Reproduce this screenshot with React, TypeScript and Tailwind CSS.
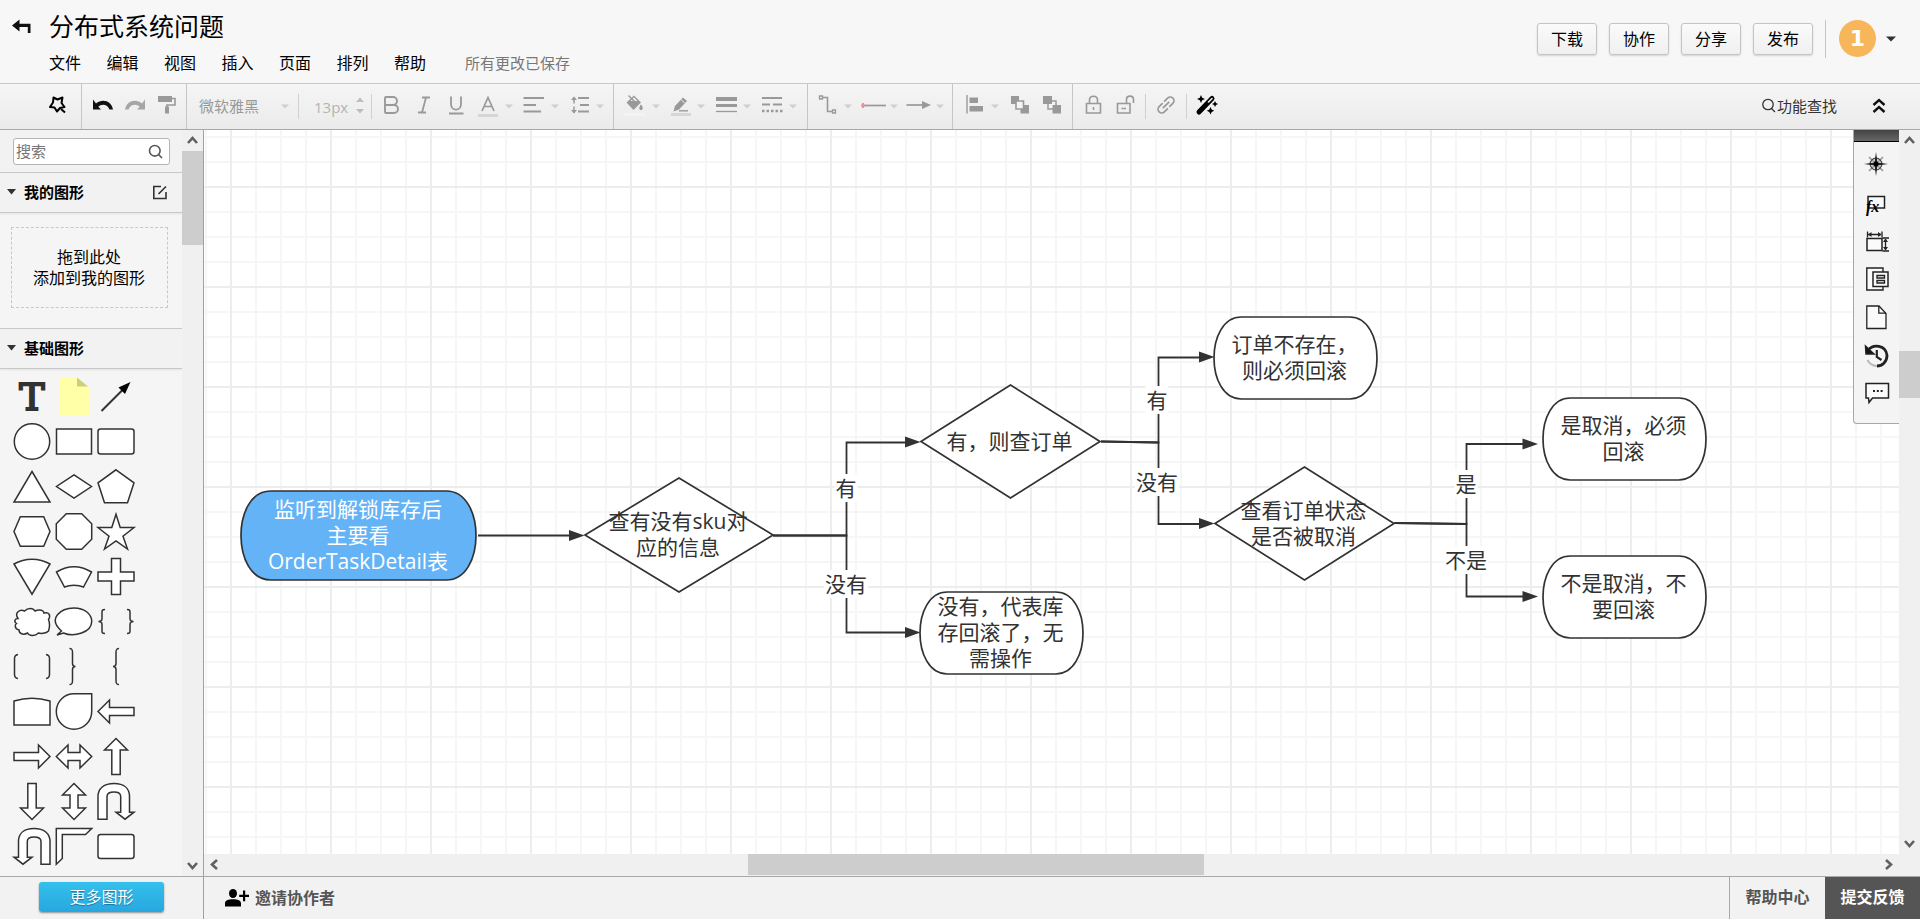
import React from "react";
import { Bold } from "lucide-react";

const INK = "#323232";

/* ---------- shared pieces ---------- */

type Dir = "up" | "down" | "left" | "right";

const chevrons: Record<Dir, string> = {
  up: "M6 13L10.5 8L15 13",
  down: "M6 8L10.5 13L15 8",
  left: "M13 6L8 10.5L13 15",
  right: "M8 6L13 10.5L8 15",
};

function ScrollArrow({ dir, label }: { dir: Dir; label: string }) {
  return (
    <button type="button" aria-label={label} className="block size-[21px] shrink-0">
      <svg width="21" height="21" viewBox="0 0 21 21">
        <path d={chevrons[dir]} fill="none" stroke="#606060" strokeWidth="2.6" />
      </svg>
    </button>
  );
}

/* ---------- header ---------- */

const menus = ["文件", "编辑", "视图", "插入", "页面", "排列", "帮助"];
const actions = ["下载", "协作", "分享", "发布"];

function Header() {
  return (
    <header className="flex h-[84px] shrink-0 items-start border-b border-[#c8c8c8] bg-[#f7f7f7]">
      <a href="#back" aria-label="返回" className="mt-[17px] ml-[10px] block w-[39px]">
        <svg width="24" height="18" viewBox="0 0 24 18">
          <path d="M2 8.500L9.500 2.500V6.700H20.500V16H17.800V10H9.500V14.500Z" fill="#111" />
        </svg>
      </a>
      <div className="flex flex-col">
        <h1 className="mt-2 text-[25px] leading-9 text-black">分布式系统问题</h1>
        <nav className="mt-[7px] flex items-center">
          <ul className="flex w-[377px] justify-between">
            {menus.map((m) => (
              <li key={m}>
                <button type="button" className="block text-base leading-6 text-black">
                  {m}
                </button>
              </li>
            ))}
          </ul>
          <span className="ml-[39px] text-[15px] leading-6 text-[#777]">所有更改已保存</span>
        </nav>
      </div>
      <div className="ml-auto flex items-start pr-6">
        <div className="mt-[23px] flex gap-3">
          {actions.map((a) => (
            <button
              key={a}
              type="button"
              className="h-8 w-[60px] rounded-[3px] border border-[#c4c4c4] bg-linear-to-b from-[#fafafa] to-[#f0f0f0] text-base leading-7 text-black shadow-[0_1px_2px_rgba(0,0,0,0.15)]"
            >
              {a}
            </button>
          ))}
        </div>
        <span className="mt-5 ml-3 h-[38px] w-px bg-[#c4c4c4]" />
        <button type="button" aria-label="账户" className="mt-5 ml-[13px] flex items-center gap-[10px]">
          <span className="flex size-[37px] items-center justify-center rounded-full bg-[#f8b65b] font-['DejaVu_Sans',sans-serif] text-[22px] leading-none font-bold text-white">
            1
          </span>
          <svg width="10" height="6" viewBox="0 0 10 6">
            <path d="M0 0.500H10L5 5.500Z" fill={INK} />
          </svg>
        </button>
      </div>
    </header>
  );
}

/* ---------- toolbar ---------- */

/* Toolbar artwork shares one sheet whose y axis runs from 84 to 129. */
function Tool({ label, x, w, children }: { label: string; x: number; w: number; children: React.ReactNode }) {
  return (
    <button type="button" aria-label={label} className="block shrink-0">
      <svg width={w} height="45" viewBox={`${x} 84 ${w} 45`} fill="none" stroke="#999" strokeWidth="1.800">
        {children}
      </svg>
    </button>
  );
}

function Caret({ x }: { x: number }) {
  return <path d={`M${x - 4} 104.500h8l-4 4z`} fill="#cfcfcf" stroke="none" />;
}

function Group({ children, first }: { children: React.ReactNode; first?: boolean }) {
  return (
    <div className={first ? "flex h-[45px] items-center pl-10" : "flex h-[45px] items-center border-l border-[#c6c6c6]"}>
      {children}
    </div>
  );
}

function Divider() {
  return <span className="h-[25px] w-px shrink-0 bg-[#d0d0d0]" />;
}

function Toolbar() {
  return (
    <div className="flex h-[46px] shrink-0 items-start border-b border-[#a8a8a8] bg-linear-to-b from-[#f5f5f5] to-[#ebebeb]">
      <Group first>
        <Tool label="美化" x={40} w={41}>
          <path
            d="M53.500 97.500L57.500 99.500L62.500 97.500L61.500 103L64.500 107L60 108L57 111.500L54.500 107.500L50 107L53 102.500Z"
            stroke="#000"
            strokeWidth="2"
            strokeLinejoin="round"
          />
          <path d="M61 109L65 112.500" stroke="#000" strokeWidth="2" />
        </Tool>
      </Group>
      <Group>
        <Tool label="撤销" x={82} w={36}>
          <path d="M93 99.500V109.500H101L98.300 106.800C101 104 107 103.500 109.500 109.500H113C111.500 100 101.500 98.500 96 103.500Z" fill="#111" stroke="none" />
        </Tool>
        <Tool label="恢复" x={118} w={33}>
          <path d="M145 99.500V109.500H137L139.700 106.800C137 104 131 103.500 128.500 109.500H125C126.500 100 136.500 98.500 142 103.500Z" fill="#a6a6a6" stroke="none" />
        </Tool>
        <Tool label="格式刷" x={151} w={35}>
          <path d="M158 96H172V102H158Z" fill="#999" stroke="none" />
          <path d="M172 98.500H175V105H167V107" strokeWidth="1.600" />
          <path d="M165 106.500H169V113.500H165Z" fill="#999" stroke="none" />
        </Tool>
      </Group>
      <Group>
        <select
          aria-label="字体"
          className="ml-3 w-[69px] appearance-none bg-transparent pb-[2px] text-[15px] leading-6 text-[#999] outline-none"
          defaultValue="微软雅黑"
        >
          <option>微软雅黑</option>
        </select>
        <svg width="30" height="45" viewBox="268 84 30 45" className="shrink-0">
          <Caret x={285} />
        </svg>
        <Divider />
        <input
          aria-label="字号"
          defaultValue="13px"
          className="ml-[15px] w-9 bg-transparent text-[15px] leading-6 text-[#b4b4b4] outline-none"
        />
        <svg width="21" height="45" viewBox="350 84 21 45" className="shrink-0">
          <path d="M356 102h8l-4-4.500zM356 109h8l-4 4.500z" fill="#bdbdbd" />
        </svg>
        <Divider />
        <Tool label="粗体" x={372} w={32}>
          <Bold x={379} y={93} size={24} strokeWidth={1.9} color="#999" />
        </Tool>
        <Tool label="斜体" x={404} w={36}>
          <path d="M422 97.500H430M418 112.500H426M426 97.500L422 112.500" />
        </Tool>
        <Tool label="下划线" x={440} w={32}>
          <path d="M451 96.500V104C451 111.500 461 111.500 461 104V96.500M449 113.500H463.500" />
        </Tool>
        <Tool label="文字颜色" x={472} w={45}>
          <path d="M482 111L488 97.500L494 111M484.200 106.500H491.800" strokeWidth="1.700" />
          <path d="M478 114H498V117H478Z" fill="#d6d6d6" stroke="none" />
          <Caret x={509} />
        </Tool>
        <Tool label="对齐" x={517} w={47}>
          <path d="M523.500 98H544M523.500 105H536M523.500 111.500H541" />
          <Caret x={555} />
        </Tool>
        <Tool label="行距" x={564} w={49}>
          <path d="M578 98H589M580 105H589M578 111.500H589" />
          <path d="M574 97V103.500M574 106.500V113" strokeWidth="1.500" />
          <path d="M571 100L574 96.500L577 100ZM571 110L574 113.500L577 110Z" fill="#999" stroke="none" />
          <Caret x={600} />
        </Tool>
      </Group>
      <Group>
        <Tool label="填充颜色" x={614} w={51}>
          <path d="M626.500 102.500L634 95.500L641 102.500L633.500 110Z" fill="#999" stroke="none" />
          <path d="M630.500 101L634 97.300L637.500 101Z" fill="#eee" stroke="none" />
          <path d="M628.500 95.500L634.500 101.500" strokeWidth="1.400" />
          <path d="M641 104.500C643.500 107.500 643 110 641 110S638.500 107.500 641 104.500Z" fill="#999" stroke="none" />
          <path d="M624 113H645V116H624Z" fill="#f3f3f3" stroke="none" />
          <Caret x={656} />
        </Tool>
        <Tool label="线条颜色" x={665} w={44}>
          <path d="M673.500 111.500L675 106L683 97.500L687 101L679 109.500Z" fill="#999" stroke="none" />
          <path d="M681 99.500L685 103.500" stroke="#eee" strokeWidth="1" />
          <path d="M679 110.800H688" strokeWidth="1.400" />
          <path d="M671 113H691V116H671Z" fill="#d6d6d6" stroke="none" />
          <Caret x={701} />
        </Tool>
        <Tool label="线条宽度" x={709} w={46}>
          <path d="M716 99H737" strokeWidth="4" />
          <path d="M716 105.500H737" strokeWidth="3" />
          <path d="M716 111.500H737" strokeWidth="1.300" />
          <Caret x={747} />
        </Tool>
        <Tool label="线条样式" x={755} w={52}>
          <path d="M762 98H782M762 104.500H770M773 104.500H782" />
          <path d="M762 111H783" strokeWidth="2.500" strokeDasharray="2.500 2" />
          <Caret x={793} />
        </Tool>
      </Group>
      <Group>
        <Tool label="连线类型" x={808} w={47}>
          <path d="M822 97.500H827.500V111.500H832" strokeWidth="1.600" />
          <path d="M819.500 96H822.500V99H819.500ZM832.500 110H835.500V113H832.500Z" strokeWidth="1.300" />
          <Caret x={848} />
        </Tool>
        <Tool label="起点" x={855} w={46}>
          <path d="M863 105.500H886" strokeWidth="1.700" />
          <path d="M861 105.500H865M863 103V108" stroke="#f09090" strokeWidth="2" />
          <Caret x={894} />
        </Tool>
        <Tool label="终点" x={901} w={51}>
          <path d="M906.500 105H924" strokeWidth="1.700" />
          <path d="M922 101L931 105L922 109Z" fill="#999" stroke="none" />
          <Caret x={940} />
        </Tool>
      </Group>
      <Group>
        <Tool label="对齐图形" x={953} w={51}>
          <path d="M967 95V113.500" strokeWidth="1.400" />
          <path d="M969.500 97.500H978V103H969.500ZM969.500 106H983V111.500H969.500Z" fill="#999" stroke="none" />
          <Caret x={995} />
        </Tool>
        <Tool label="置于顶层" x={1004} w={32}>
          <path d="M1011 96H1019V104H1011ZM1020.500 105H1029V113.500H1020.500Z" fill="#999" stroke="none" />
          <path d="M1016 101H1023.500V109H1016Z" fill="#f4f4f4" strokeWidth="1.600" />
        </Tool>
        <Tool label="置于底层" x={1036} w={36}>
          <path d="M1048 101H1056V109H1048Z" fill="#f4f4f4" strokeWidth="1.500" />
          <path d="M1043 96H1052V104H1043ZM1052.500 105H1061V113.500H1052.500Z" fill="#999" stroke="none" />
        </Tool>
      </Group>
      <Group>
        <Tool label="锁定" x={1073} w={36}>
          <path d="M1086.500 103.500H1100.500V113H1086.500ZM1089.500 103V100C1089.500 95 1097.500 95 1097.500 100V103M1093.500 107V110" strokeWidth="1.600" />
        </Tool>
        <Tool label="解锁" x={1109} w={36}>
          <path d="M1117.500 103.500H1130V113H1117.500ZM1126.500 103V99.500C1126.500 95 1133.500 95 1133.500 99.500V103M1121.500 108.500H1126" strokeWidth="1.600" />
        </Tool>
        <Divider />
        <Tool label="链接" x={1146} w={40}>
          <g transform="rotate(-45 1166 105)" strokeWidth="1.700">
            <path d="M1165 101.300H1160a3.700 3.700 0 0 0 0 7.400H1165M1167 101.300H1172a3.700 3.700 0 0 1 0 7.400H1167M1161.500 105H1170.500" />
          </g>
        </Tool>
        <Divider />
        <Tool label="一键美化" x={1187} w={37}>
          <path d="M1199 112L1212 98.500" stroke="#000" strokeWidth="5" strokeLinecap="round" />
          <path d="M1208.500 102L1212 98.500" stroke="#eee" strokeWidth="1.600" strokeLinecap="round" />
          <path
            d="M1201 95l1.200 2.800 2.800 1.200-2.800 1.200-1.200 2.800-1.200-2.800-2.800-1.200 2.800-1.200zM1215 101l1 2 2 1-2 1-1 2-1-2-2-1 2-1zM1210.500 107l1.200 2.500 2.500 1.200-2.500 1.200-1.200 2.500-1.200-2.500-2.500-1.200 2.500-1.200z"
            fill="#000"
            stroke="none"
          />
        </Tool>
      </Group>
      <div className="ml-auto flex h-[45px] items-center pr-[34px]">
        <button type="button" className="flex items-center gap-px pb-[2px] text-[15px] leading-6 text-[#333]">
          <svg width="15" height="15" viewBox="0 0 15 15" fill="none" stroke="#333" strokeWidth="1.300">
            <circle cx="7" cy="6.500" r="5.200" />
            <path d="M10.500 10.500L14 14" />
          </svg>
          功能查找
        </button>
        <button type="button" aria-label="收起" className="ml-[35px] block pb-px">
          <svg width="14" height="16" viewBox="0 0 14 16" fill="none" stroke="#111" strokeWidth="2.400">
            <path d="M1.500 7L7 2L12.500 7M1.500 14L7 9L12.500 14" />
          </svg>
        </button>
      </div>
    </div>
  );
}

/* ---------- shape palette ---------- */

const bend =
  "M-18 17.700V-5C-18-13-12-18-2-18S13.500-13 13.500-5V10.700H18L9 17.700L0 10.700H4.700V-5C4.700-8 2.500-9.500-2-9.500S-9-8-9-5V17.700Z";

const palette: { name: string; art: React.ReactNode }[] = [
  {
    name: "文本",
    art: (
      <text
        x="0"
        y="13.500"
        textAnchor="middle"
        fontFamily="DejaVu Serif"
        fontSize="38"
        fill={INK}
        stroke={INK}
        strokeWidth="2"
      >
        T
      </text>
    ),
  },
  {
    name: "备注",
    art: (
      <g stroke="none">
        <path d="M-15-19H3L15-9V19H-15Z" fill="#ffffa8" />
        <path d="M3-19V-10H14Z" fill="#cdcd7e" />
      </g>
    ),
  },
  {
    name: "箭头线",
    art: (
      <g>
        <path d="M-14.500 14.500L8-8" strokeWidth="2" />
        <path d="M14.500-14.500L9-2.500L2.500-9Z" fill="#000" stroke="none" />
      </g>
    ),
  },
  { name: "圆", art: <circle r="17.700" /> },
  { name: "矩形", art: <rect x="-17.500" y="-12.500" width="35" height="25" /> },
  { name: "圆角矩形", art: <rect x="-18" y="-12.500" width="36" height="25" rx="2.500" /> },
  { name: "三角形", art: <path d="M0-15L18 15.500H-18Z" /> },
  { name: "菱形", art: <path d="M0-11.700L17.500 0L0 11.700L-17.500 0Z" /> },
  { name: "五边形", art: <path d="M0-16.700L18-3.700L11.500 16.300H-11.500L-18-3.700Z" /> },
  { name: "六边形", art: <path d="M-11.700-14.700H11.700L18 0L11.700 14.700H-11.700L-18 0Z" /> },
  { name: "八边形", art: <path d="M-7.700-17.700H7.700L17.700-7.700V7.700L7.700 17.700H-7.700L-17.700 7.700V-7.700Z" /> },
  { name: "五角星", art: <path d="M0-17.300L4.200-4H18L7 4.700L11.500 17.500L0 9.500L-11.500 17.500L-7 4.700L-18-4H-4.200Z" /> },
  { name: "扇形", art: <path d="M-18-12.500C-7-19 7-19 18-12.500L0 17.700Z" /> },
  { name: "圆环段", art: <path d="M-17.500-4.500C-6-11.500 6-11.500 17.500-4.500L9.500 10.500C4 8 -4 8-9.500 10.500Z" /> },
  { name: "十字", art: <path d="M-4.500-18H4.500V-4.500H18V4.500H4.500V18H-4.500V4.500H-18V-4.500H-4.500Z" /> },
  {
    name: "云",
    art: (
      <path d="M-14-3C-18-9-12-12.500-7.500-10.500C-4-14 1-14 3-10.500C8-13 12-10.500 12-8.500C17-10 19-6 16.500-2C18.500 3 17 8 16.500 9.500C14 12.500 8 12 6.500 11.500C3 15-3 14.500-4.500 11.500C-9 14-13 12-13 8.500C-18 7-17 3-15.500 2C-18.500 0-17-3-14-3Z" />
    ),
  },
  {
    name: "气泡",
    art: <path d="M-12.500 9.500C-27-3-13-13.500 0-13.500C10-13.500 17.700-8 17.700 0C17.700 11 0 16-10.500 11.500L-17 13.500Z" />,
  },
  {
    name: "花括号对",
    art: (
      <path
        fill="none"
        d="M-11-12C-14-12-14-11-14-9V-3C-14-1-15 0-17.500 0C-15 0-14 1-14 3V9C-14 11-14 12-11 12M11-12C14-12 14-11 14-9V-3C14-1 15 0 17.500 0C15 0 14 1 14 3V9C14 11 14 12 11 12"
      />
    ),
  },
  {
    name: "括号对",
    art: <path fill="none" d="M-14-12C-17-11.500-17.500-10-17.500-8V8C-17.500 10-17 11.500-14 12M14-12C17-11.500 17.500-10 17.500-8V8C17.500 10 17 11.500 14 12" />,
  },
  {
    name: "右花括号",
    art: <path fill="none" d="M-4.500-18C-2-18-1.500-17-1.500-14V-3C-1.500-1-1 0 1.500 0C-1 0-1.500 1-1.500 3V14C-1.500 17-2 18-4.500 18" />,
  },
  {
    name: "左花括号",
    art: <path fill="none" d="M3-18C.5-18 0-17 0-14V-3C0-1-.5 0-3 0C-.5 0 0 1 0 3V14C0 17 .5 18 3 18" />,
  },
  { name: "弧顶矩形", art: <path d="M-18-10.500C-6-14.300 6-14.300 18-10.500V13.500H-18Z" /> },
  { name: "水滴", art: <path d="M0-17.700H17.700V0A17.700 17.700 0 1 1 0-17.700Z" /> },
  { name: "左箭头", art: <path d="M-18 0L-6.500-11.500V-4H18V4H-6.500V11.500Z" /> },
  { name: "右箭头", art: <path d="M18 0L6.500-11.500V-4H-18V4H6.500V11.500Z" /> },
  { name: "左右箭头", art: <path d="M-17.700 0L-6-11.500V-4H6V-11.500L17.700 0L6 11.500V4H-6V11.500Z" /> },
  { name: "上箭头", art: <path d="M0-18L11.500-6.500H4.200V18H-4.200V-6.500H-11.500Z" /> },
  { name: "下箭头", art: <path d="M0 18L11.500 6.500H4.200V-18H-4.200V6.500H-11.500Z" /> },
  { name: "上下箭头", art: <path d="M0-18L11.500-6.500H4V6.500H11.500L0 18L-11.500 6.500H-4V-6.500H-11.500Z" /> },
  { name: "右回转箭头", art: <path d={bend} /> },
  { name: "左回转箭头", art: <path d={bend} transform="scale(-1 1)" /> },
  { name: "角形", art: <path d="M-17.700-18H17.700L11.500-12H-11.700V12L-17.700 17.700Z" /> },
  { name: "容器", art: <rect x="-18" y="-12" width="36" height="24" rx="2.500" /> },
];

function SectionTitle({ title, children }: { title: string; children?: React.ReactNode }) {
  return (
    <div className="flex h-10 shrink-0 items-center border-b border-[#c8c8c8] bg-[#f2f2f2] pr-[14px] pb-px pl-[7px] shadow-[0_1px_2px_rgba(0,0,0,0.08)]">
      <button type="button" className="flex items-center gap-2 text-[15px] leading-6 font-bold text-black">
        <svg width="9" height="6" viewBox="0 0 9 6">
          <path d="M0 0H9L4.500 5.500Z" fill={INK} />
        </svg>
        {title}
      </button>
      {children}
    </div>
  );
}

function Sidebar() {
  return (
    <aside className="flex w-[204px] shrink-0 border-r border-[#a0a0a0]">
      <div className="flex min-w-0 flex-1 flex-col overflow-hidden bg-[#f5f5f5]">
        <div className="h-[43px] shrink-0 border-b border-[#c8c8c8] bg-[#f2f2f2] pt-2 pr-3 pl-[13px]">
          <label className="flex h-[27px] items-center rounded-[3px] border border-[#b4b4b4] bg-white pr-[6px] pb-px pl-[2px]">
            <input
              aria-label="搜索"
              placeholder="搜索"
              className="min-w-0 flex-1 bg-transparent text-[15px] leading-6 text-black outline-none placeholder:text-[#757575]"
            />
            <svg width="15" height="15" viewBox="0 0 15 15" fill="none" stroke="#555" strokeWidth="1.600">
              <circle cx="6.800" cy="6.800" r="5.300" />
              <path d="M10.500 10.500L14 14" />
            </svg>
          </label>
        </div>
        <SectionTitle title="我的图形">
          <button type="button" aria-label="管理我的图形" className="ml-auto block">
            <svg width="16" height="15" viewBox="0 0 16 15" fill="none" stroke={INK} strokeWidth="1.600">
              <path d="M9 1.500H1.800V13.500H14V7M6.500 9L14 1.500" />
            </svg>
          </button>
        </SectionTitle>
        <div className="shrink-0 border-b border-[#c8c8c8] pt-[14px] pr-[14px] pb-5 pl-[11px]">
          <div className="flex h-[81px] items-center justify-center border border-dashed border-[#c8c8c8] pr-px text-center text-base leading-[21px] text-black">
            拖到此处
            <br />
            添加到我的图形
          </div>
        </div>
        <SectionTitle title="基础图形" />
        <div className="ml-[11px] grid w-[126px] grid-cols-3 pt-[5px]">
          {palette.map((p) => (
            <button key={p.name} type="button" aria-label={p.name} className="block h-[45px] w-[42px]">
              <svg width="42" height="45" viewBox="-21 -22.500 42 45" fill="#fff" stroke={INK} strokeWidth="1.500">
                {p.art}
              </svg>
            </button>
          ))}
        </div>
      </div>
      <div className="flex w-[21px] shrink-0 flex-col bg-[#f0f0f0]">
        <ScrollArrow dir="up" label="向上滚动" />
        <div className="flex-1">
          <div className="h-[94px] bg-[#cdcdcd]" />
        </div>
        <ScrollArrow dir="down" label="向下滚动" />
      </div>
    </aside>
  );
}

/* ---------- diagram ---------- */

type DiagramNode = {
  kind: "terminator" | "decision";
  x: number;
  y: number;
  w: number;
  h: number;
  lines: string[];
  filled?: boolean;
};

/* Board coordinates; the viewport is scrolled to (204, 130). */
const nodes: DiagramNode[] = [
  { kind: "terminator", x: 241, y: 491, w: 235, h: 89, lines: ["监听到解锁库存后", "主要看", "OrderTaskDetail表"], filled: true },
  { kind: "decision", x: 585, y: 478, w: 188, h: 114, lines: ["查有没有sku对", "应的信息"] },
  { kind: "decision", x: 921, y: 385, w: 179, h: 113, lines: ["有，则查订单"] },
  { kind: "terminator", x: 920, y: 592, w: 163, h: 82, lines: ["没有，代表库", "存回滚了，无", "需操作"] },
  { kind: "terminator", x: 1214, y: 317, w: 163, h: 82, lines: ["订单不存在，", "则必须回滚"] },
  { kind: "decision", x: 1215, y: 467, w: 179, h: 113, lines: ["查看订单状态", "是否被取消"] },
  { kind: "terminator", x: 1543, y: 398, w: 163, h: 82, lines: ["是取消，必须", "回滚"] },
  { kind: "terminator", x: 1543, y: 556, w: 163, h: 82, lines: ["不是取消，不", "要回滚"] },
];

const wires = [
  "M478 535.500H572",
  "M773 535.500H846.500V442.500H908",
  "M773 535.500H846.500V632.500H908",
  "M1101 441.500L1158.500 442.500V357.500H1202",
  "M1101 441.500L1158.500 442.500V524H1202",
  "M1394.500 523L1466.500 524V444H1526",
  "M1394.500 523L1466.500 524V596.500H1526",
];

const heads = [
  [584.5, 535.5],
  [920.5, 442],
  [920.5, 632.5],
  [1214.5, 357],
  [1214.5, 523.5],
  [1538, 444],
  [1538, 596.5],
];

const wireLabels = [
  { text: "有", x: 846, y: 488 },
  { text: "没有", x: 846, y: 584 },
  { text: "有", x: 1157, y: 400 },
  { text: "没有", x: 1157, y: 482 },
  { text: "是", x: 1466, y: 484 },
  { text: "不是", x: 1466, y: 560 },
];

function outline(n: DiagramNode) {
  const { x, y, w, h } = n;
  if (n.kind === "decision") {
    return `M${x} ${y + h / 2}L${x + w / 2} ${y}L${x + w} ${y + h / 2}L${x + w / 2} ${y + h}Z`;
  }
  const r = h / 3;
  const k = r / 3;
  return `M${x + r} ${y}H${x + w - r}C${x + w + k} ${y} ${x + w + k} ${y + h} ${x + w - r} ${y + h}H${x + r}C${x - k} ${y + h} ${x - k} ${y} ${x + r} ${y}Z`;
}

function Diagram() {
  return (
    <div className="relative min-w-0 flex-1 overflow-hidden bg-white">
      <div className="absolute -top-[130px] -left-[204px] h-[4000px] w-[6000px]">
        <svg className="absolute inset-0 size-full">
          <defs>
            <pattern id="grid" x="230" y="186" width="100" height="100" patternUnits="userSpaceOnUse">
              <path
                d="M25 0h2v100h-2zM50 0h2v100h-2zM75 0h2v100h-2zM0 25h100v2H0zM0 50h100v2H0zM0 75h100v2H0z"
                fill="#f6f6f6"
              />
              <path d="M0 0h100v2H0zM0 0h2v100H0z" fill="#ededed" />
            </pattern>
          </defs>
          <rect width="100%" height="100%" fill="url(#grid)" />
          <g fill="none" stroke={INK} strokeWidth="1.800">
            {wires.map((d) => (
              <path key={d} d={d} />
            ))}
          </g>
          {heads.map(([x, y]) => (
            <path key={`${x}-${y}`} d={`M${x} ${y}l-15.500-5.500v11z`} fill={INK} />
          ))}
          {nodes.map((n) => (
            <path key={n.lines[0]} d={outline(n)} fill={n.filled ? "#64b3f6" : "#fff"} stroke={INK} strokeWidth="1.700" />
          ))}
        </svg>
        {nodes.map((n) => (
          <div
            key={n.lines[0]}
            className={
              n.filled
                ? "absolute flex flex-col items-center justify-center pr-px pb-[2px] text-[21px] leading-[26px] whitespace-nowrap text-white"
                : "absolute flex flex-col items-center justify-center pr-[2px] pb-[2px] text-[21px] leading-[26px] whitespace-nowrap text-[#323232]"
            }
            style={{ left: n.x, top: n.y, width: n.w, height: n.h }}
          >
            {n.lines.map((l) => (
              <span key={l}>{l}</span>
            ))}
          </div>
        ))}
        {wireLabels.map((l) => (
          <span
            key={`${l.x}-${l.y}`}
            className="absolute -translate-x-1/2 -translate-y-1/2 bg-white px-px text-[21px] leading-7 whitespace-nowrap text-[#323232]"
            style={{ left: l.x, top: l.y }}
          >
            {l.text}
          </span>
        ))}
      </div>
    </div>
  );
}

/* ---------- right dock ---------- */

function DockItem({ label, y, h, children }: { label: string; y: number; h: number; children: React.ReactNode }) {
  return (
    <button type="button" aria-label={label} className="block">
      <svg width="45" height={h} viewBox={`1854 ${y} 45 ${h}`} fill="none" stroke="#222" strokeWidth="1.500">
        {children}
      </svg>
    </button>
  );
}

function Dock() {
  return (
    <div className="absolute top-0 right-0 flex w-[46px] flex-col rounded-bl-[4px] border-b border-l border-[#a8a8a8] bg-[#f4f4f4] pb-2">
      <div className="h-3 border-b border-black bg-linear-to-b from-[#444] to-[#666]" />
      <DockItem label="导航" y={142} h={42}>
        <path d="M1869 157L1883 171M1883 157L1869 171" stroke="#999" strokeWidth="1.600" />
        <circle cx="1876" cy="164" r="5.800" stroke="#444" strokeWidth="1.300" />
        <path
          d="M1876 152L1877.500 162.500L1888 164L1877.500 165.500L1876 176L1874.500 165.500L1864 164L1874.500 162.500Z"
          fill="#222"
          stroke="none"
        />
        <circle cx="1876" cy="164" r="2.400" fill="#000" stroke="none" />
      </DockItem>
      <DockItem label="图形属性" y={184} h={39}>
        <path d="M1868 196.500H1884.500V208H1868Z" fill="#fafafa" />
        <text x="1866" y="212" fontFamily="Liberation Serif" fontStyle="italic" fontWeight="bold" fontSize="16" fill="#000" stroke="none">
          fx
        </text>
      </DockItem>
      <DockItem label="度量" y={223} h={38}>
        <path d="M1867 238.500H1882V250.500H1867Z" fill="#fafafa" />
        <path d="M1868 234.500H1881M1867.500 231.500V237.500M1882 231.500V237.500M1885.500 239V250M1882.500 238H1889M1882.500 251H1889" strokeWidth="1.300" />
        <path d="M1868 234.500l3.500-2.500v5zM1881.500 234.500l-3.500-2.500v5zM1885.500 238.500l-2.500 3.500h5zM1885.500 250.500l-2.500-3.500h5z" fill="#222" stroke="none" />
      </DockItem>
      <DockItem label="页面" y={261} h={37}>
        <path d="M1866.800 268H1883V290H1866.800Z" fill="#fafafa" strokeWidth="1.400" />
        <path d="M1873 272H1888V286.500H1873Z" fill="#fafafa" />
        <path d="M1877 275.500H1884.500V278H1877ZM1877 280.500H1884.500V283H1877Z" strokeWidth="1.400" />
      </DockItem>
      <DockItem label="文档" y={298} h={39}>
        <path d="M1866.800 306H1879L1886 313.500V328.500H1866.800Z" fill="#fafafa" strokeWidth="1.300" />
        <path d="M1878.800 306V313.200H1886" strokeWidth="1.300" />
      </DockItem>
      <DockItem label="历史版本" y={337} h={38}>
        <path d="M1868 350.500C1873 343.500 1886 345 1887 355.500C1887 362 1882 366 1877 366" strokeWidth="2.800" />
        <path d="M1877 366C1872 366 1869 363 1867.500 360" stroke="#bbb" strokeWidth="2" />
        <path d="M1865.500 346L1866 354H1874Z" fill="#111" />
        <path d="M1876.800 350V357L1881.500 360" strokeWidth="2.200" />
      </DockItem>
      <DockItem label="评论" y={375} h={40}>
        <path d="M1866 383.500H1888.500V398H1872.500L1869 402.500L1868.500 398H1866Z" fill="#fafafa" />
        <path d="M1873 391H1875M1876.800 391H1878.800M1880.600 391H1882.600" strokeWidth="1.800" />
      </DockItem>
    </div>
  );
}

/* ---------- page ---------- */

function Workspace() {
  return (
    <main className="flex min-w-0 flex-1 flex-col">
      <div className="flex min-h-0 flex-1">
        <div className="relative flex min-w-0 flex-1">
          <Diagram />
          <Dock />
        </div>
        <div className="flex w-[21px] shrink-0 flex-col bg-[#f0f0f0]">
          <ScrollArrow dir="up" label="画布向上滚动" />
          <div className="flex-1 pt-[200px]">
            <div className="h-[47px] bg-[#cdcdcd]" />
          </div>
          <ScrollArrow dir="down" label="画布向下滚动" />
        </div>
      </div>
      <div className="flex h-[22px] shrink-0 bg-[#f0f0f0] pr-[21px] pb-px">
        <ScrollArrow dir="left" label="画布向左滚动" />
        <div className="min-w-0 flex-1 pl-[523px]">
          <div className="h-[21px] w-[456px] bg-[#cdcdcd]" />
        </div>
        <ScrollArrow dir="right" label="画布向右滚动" />
      </div>
    </main>
  );
}

function Footer() {
  return (
    <footer className="flex h-[43px] shrink-0 border-t border-[#a8a8a8] bg-[#f2f2f2]">
      <div className="flex w-[204px] shrink-0 items-start justify-center border-r border-[#a0a0a0] pt-[5px]">
        <button
          type="button"
          className="h-[30px] w-[125px] rounded-[3px] bg-linear-to-b from-[#34c0ec] to-[#28a7df] text-base leading-7 text-white shadow-[0_1px_2px_rgba(0,0,0,0.4)] [text-shadow:0_1px_1px_rgba(0,0,0,0.35)]"
        >
          更多图形
        </button>
      </div>
      <button type="button" className="ml-[21px] flex items-center gap-[6px] text-base leading-6 font-bold text-[#555]">
        <svg width="24" height="18" viewBox="0 0 24 18" fill="#000">
          <ellipse cx="8" cy="4.500" rx="4" ry="4.500" />
          <path d="M0 17.500V14.500C0 11.500 3 10.300 8 10.300S16 11.500 16 14.500V17.500ZM18 1.500H20.200V5.800H24V8H20.200V12.300H18V8H14.200V5.800H18Z" />
        </svg>
        邀请协作者
      </button>
      <a href="#help" className="ml-auto flex w-24 items-center justify-center border-l border-[#a8a8a8] pb-[2px] text-base leading-6 font-bold text-[#555]">
        帮助中心
      </a>
      <a href="#feedback" className="flex w-[95px] items-center justify-center bg-[#555] pb-[2px] text-base leading-6 font-bold text-white">
        提交反馈
      </a>
    </footer>
  );
}

export default function App() {
  return (
    <div className="flex h-screen flex-col overflow-hidden bg-[#f0f0f0] font-['Open_Sans','Noto_Sans_CJK_SC',sans-serif]">
      <Header />
      <Toolbar />
      <div className="flex min-h-0 flex-1">
        <Sidebar />
        <Workspace />
      </div>
      <Footer />
    </div>
  );
}
